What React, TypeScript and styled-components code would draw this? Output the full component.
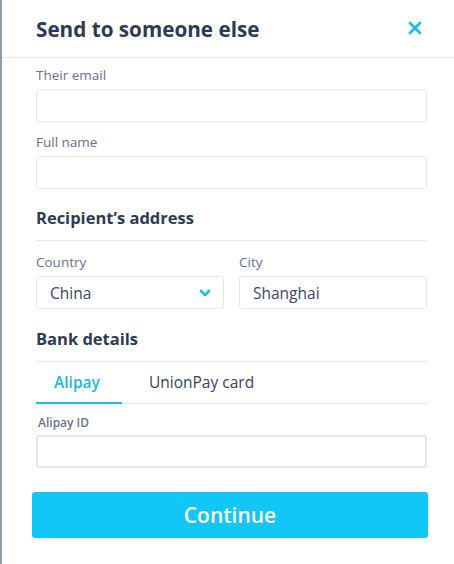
import React from "react";
import styled, { createGlobalStyle } from "styled-components";

const Global = createGlobalStyle`
  html, body { margin: 0; padding: 0; background: #ffffff; }
  body { font-family: "Open Sans", "Lato", sans-serif; -webkit-font-smoothing: antialiased; }
  * { box-sizing: border-box; }
`;

const Modal = styled.div`
  width: 454px;
  height: 564px;
  background: #fff;
  border-left: 2px solid #8e9bb0;
  display: flex;
  flex-direction: column;
`;

const Header = styled.header`
  height: 58px;
  display: flex;
  align-items: center;
  justify-content: space-between;
  padding: 0 30px 0 34px;
  border-bottom: 1px solid #e3e6ea;
`;

const Title = styled.h1`
  margin: 0;
  font-size: 20.7px;
  line-height: 26px;
  font-weight: 700;
  color: #2d3a55;
`;

const Close = styled.button`
  border: 0;
  background: none;
  padding: 0;
  width: 16px;
  height: 16px;
  display: flex;
  cursor: pointer;
`;

const Body = styled.div`
  padding: 8px 27px 0 34px;
  display: flex;
  flex-direction: column;
`;

const Field = styled.div<{ $mt?: number }>`
  display: flex;
  flex-direction: column;
  flex: 1;
  margin-top: ${(p) => p.$mt ?? 0}px;
`;

const Label = styled.label<{ $small?: boolean }>`
  font-size: ${(p) => (p.$small ? "12px" : "13.5px")};
  color: #66738b;
  font-weight: ${(p) => (p.$small ? 600 : 400)};
  line-height: 18px;
  margin: 0 0 ${(p) => (p.$small ? "3px" : "5px")} ${(p) => (p.$small ? "2px" : "0")};
`;

const Input = styled.div<{ $strong?: boolean }>`
  height: 33px;
  border: ${(p) => (p.$strong ? "2px solid #e4e6e9" : "1px solid #e6e8eb")};
  border-radius: 3px;
  display: flex;
  align-items: center;
  justify-content: space-between;
  padding: 0 12px 0 13px;
  font-size: 15.5px;
  color: #3a465f;
`;

const Row = styled.div`
  display: flex;
  gap: 15px;
  margin-top: 12px;
`;

const Section = styled.h2<{ $mt: number }>`
  margin: ${(p) => p.$mt}px 0 0;
  font-size: 16.5px;
  line-height: 22px;
  font-weight: 700;
  color: #2d3a55;
  padding-bottom: 11px;
  border-bottom: 1px solid #e5e7ea;
`;

const Tabs = styled.div`
  display: flex;
  border-bottom: 1px solid #e5e7ea;
  height: 42px;
`;

const Tab = styled.div<{ $active?: boolean }>`
  padding: 0 0 0 ${(p) => (p.$active ? "18px" : "27px")};
  width: ${(p) => (p.$active ? "86px" : "auto")};
  display: flex;
  align-items: center;
  font-size: 15.5px;
  font-weight: ${(p) => (p.$active ? 600 : 500)};
  color: ${(p) => (p.$active ? "#1ab8e4" : "#37435c")};
  border-bottom: 2px solid ${(p) => (p.$active ? "#1fbde6" : "transparent")};
  margin-bottom: -1px;
`;

const Button = styled.button`
  margin: 24px 26px 0 30px;
  height: 46px;
  border: 0;
  border-radius: 3px;
  background: #12c6f6;
  color: #fff;
  font-family: inherit;
  font-size: 21px;
  font-weight: 600;
  cursor: pointer;
`;

export default function App() {
  return (
    <>
      <Global />
      <Modal>
        <Header>
          <Title>Send to someone else</Title>
          <Close aria-label="Close">
            <svg width="14" height="14" viewBox="0 0 14 14">
              <path d="M2 2 L12 12 M12 2 L2 12" stroke="#1cbbe6" strokeWidth="2.8" strokeLinecap="round" />
            </svg>
          </Close>
        </Header>
        <Body>
          <Field>
            <Label>Their email</Label>
            <Input />
          </Field>
          <Field $mt={11}>
            <Label>Full name</Label>
            <Input />
          </Field>
          <Section $mt={18}>Recipient’s address</Section>
          <Row>
            <Field>
              <Label>Country</Label>
              <Input>
                China
                <svg width="12" height="8" viewBox="0 0 12 8">
                  <path d="M2 2 L6 6 L10 2" fill="none" stroke="#1cbbe6" strokeWidth="2.6" strokeLinecap="round" strokeLinejoin="round" />
                </svg>
              </Input>
            </Field>
            <Field>
              <Label>City</Label>
              <Input>Shanghai</Input>
            </Field>
          </Row>
          <Section $mt={19}>Bank details</Section>
          <Tabs>
            <Tab $active>Alipay</Tab>
            <Tab>UnionPay card</Tab>
          </Tabs>
          <Field $mt={10}>
            <Label $small>Alipay ID</Label>
            <Input $strong />
          </Field>
        </Body>
        <Button>Continue</Button>
      </Modal>
    </>
  );
}
